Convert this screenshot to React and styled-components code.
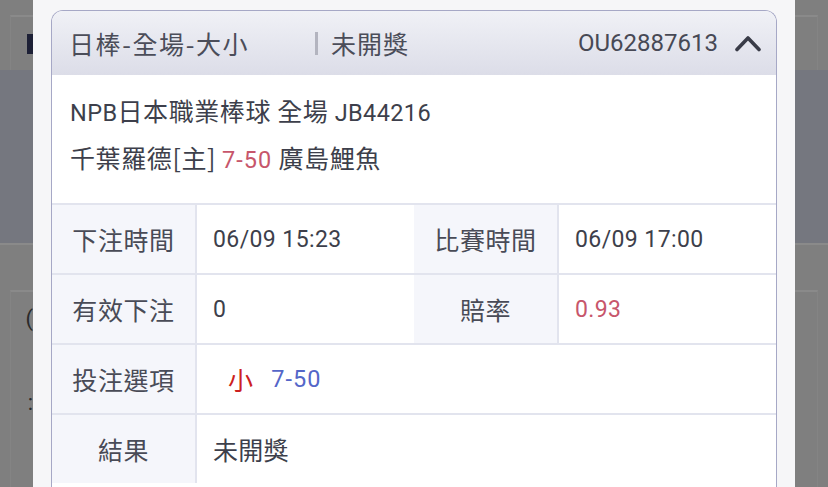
import React from 'react';
import styled, { createGlobalStyle } from 'styled-components';

const GlobalStyle = createGlobalStyle`
  html, body {
    margin: 0;
    padding: 0;
    width: 828px;
    height: 487px;
    overflow: hidden;
    background: #7f7f7f;
  }
  * { box-sizing: border-box; }
`;

const cjk = `"Noto Sans CJK TC", "Noto Sans", sans-serif`;
const latin = `Roboto, "Noto Sans CJK TC", sans-serif`;

const Screen = styled.div`
  display: flex;
  width: 828px;
  height: 487px;
  overflow: hidden;
`;

const Side = styled.div`
  width: 33px;
  flex: 0 0 33px;
  display: flex;
  flex-direction: column;
  background: #7f7f7f;
  overflow: hidden;
`;

const Band = styled.div`
  position: relative;
  flex: 0 0 ${p => p.h}px;
  background: ${p => p.bg || '#7f7f7f'};
  border-top: ${p => (p.line ? '2px solid #8a8a8a' : 'none')};
  ${p => p.edge === 'left' && 'margin-left: 10px; border-left: 1px solid #848484;'}
  ${p => p.edge === 'right' && 'margin-right: 10px; border-right: 1px solid #848484;'}
`;

const Accent = styled.div`
  position: absolute;
  right: 0;
  top: 17px;
  width: 6px;
  height: 20px;
  background: #1d2036;
`;

const Ghost = styled.span`
  position: absolute;
  right: 0;
  top: ${p => p.top}px;
  font-family: ${latin};
  font-size: 22px;
  color: #2a2a2a;
`;

const Modal = styled.div`
  flex: 0 0 762px;
  background: #f6f6f8;
  padding: 10px 18px 0;
`;

const Card = styled.div`
  border: 1.5px solid #a6a8c6;
  border-bottom: none;
  border-radius: 12px 12px 0 0;
  background: #fff;
  overflow: hidden;
  height: 500px;
`;

const Header = styled.div`
  display: flex;
  align-items: center;
  height: 64px;
  padding: 0 15px 0 17px;
  background: linear-gradient(180deg, #f0f1f6 0%, #dcdde8 100%);
  color: #4b4d59;
`;

const Title = styled.span`
  width: 246px;
  font-family: ${cjk};
  font-size: 25px;
  letter-spacing: 1.6px;
`;

const Sep = styled.span`
  width: 3px;
  height: 23px;
  background: #b3b4bf;
  margin-right: 13px;
`;

const Status = styled.span`
  font-family: ${cjk};
  font-size: 25px;
  letter-spacing: 1px;
`;

const OrderId = styled.span`
  margin-left: auto;
  font-family: ${latin};
  font-size: 24px;
  color: #474955;
  margin-right: 17px;
`;

const Info = styled.div`
  padding: 12px 18px 0;
  height: 128px;
  font-family: ${cjk};
  font-size: 25px;
  letter-spacing: 0.6px;
  color: #3d3f4b;
`;

const Line = styled.div`
  height: 47px;
  line-height: 47px;
  white-space: nowrap;
`;

const Num = styled.span`
  font-family: ${latin};
  font-size: ${p => p.size || 23.5}px;
  color: ${p => p.color || 'inherit'};
  letter-spacing: ${p => p.spacing || 0.4}px;
  margin-left: ${p => p.gap || 0}px;
`;

const Table = styled.div`
  display: grid;
  grid-template-columns: 145px 217px 145px 1fr;
  grid-auto-rows: 68px;
  row-gap: 2px;
  background: #e2e4ee;
  padding-top: 2px;
`;

const Cell = styled.div`
  display: flex;
  align-items: center;
  grid-column: ${p => p.span || 'auto'};
  background: ${p => (p.label ? '#f5f6fb' : '#fff')};
  justify-content: ${p => (p.label ? 'center' : 'flex-start')};
  padding-left: ${p => (p.label ? 0 : p.indent || 16)}px;
  border-right: ${p => (p.label ? '2px solid #e2e4ee' : 'none')};
  font-family: ${cjk};
  font-size: 25px;
  letter-spacing: ${p => (p.label ? 0.6 : 0.3)}px;
  color: ${p => (p.label ? '#494b57' : '#3d3f4b')};
`;

const Hot = styled.span`
  color: #cc2020;
`;

const Chevron = () => (
  <svg width="26" height="18" viewBox="0 0 26 18">
    <polyline
      points="2,15.5 13,4 24,15.5"
      fill="none"
      stroke="#3a3c48"
      strokeWidth="3.6"
      strokeLinecap="round"
      strokeLinejoin="round"
    />
  </svg>
);

const SideStrip = ({ side }) => (
  <Side>
    <Band h={15} />
    <Band h={55} line edge={side}>{side === 'left' && <Accent />}</Band>
    <Band h={173} bg="#75777f" />
    <Band h={47} line />
    <Band h={200} line edge={side}>
      {side === 'left' && <Ghost top={14}>(</Ghost>}
      {side === 'left' && <Ghost top={98}>:</Ghost>}
    </Band>
  </Side>
);

export default function App() {
  return (
    <>
      <GlobalStyle />
      <Screen>
        <SideStrip side="left" />
        <Modal>
          <Card>
            <Header>
              <Title>日棒-全場-大小</Title>
              <Sep />
              <Status>未開獎</Status>
              <OrderId>OU62887613</OrderId>
              <Chevron />
            </Header>
            <Info>
              <Line>
                <Num>NPB</Num>日本職業棒球 全場 <Num>JB44216</Num>
              </Line>
              <Line>
                千葉羅德[主]<Num color="#c7566b" spacing={1} gap={6}>7-50</Num> 廣島鯉魚
              </Line>
            </Info>
            <Table>
              <Cell label>下注時間</Cell>
              <Cell><Num size={23}>06/09 15:23</Num></Cell>
              <Cell label>比賽時間</Cell>
              <Cell><Num size={23}>06/09 17:00</Num></Cell>

              <Cell label>有效下注</Cell>
              <Cell><Num size={23}>0</Num></Cell>
              <Cell label>賠率</Cell>
              <Cell><Num size={23} color="#c7566b">0.93</Num></Cell>

              <Cell label>投注選項</Cell>
              <Cell span="2 / 5" indent={31}>
                <Hot>小</Hot>
                <Num color="#5466c8" spacing={1} gap={18}>7-50</Num>
              </Cell>

              <Cell label>結果</Cell>
              <Cell span="2 / 5">未開獎</Cell>
            </Table>
          </Card>
        </Modal>
        <SideStrip side="right" />
      </Screen>
    </>
  );
}
